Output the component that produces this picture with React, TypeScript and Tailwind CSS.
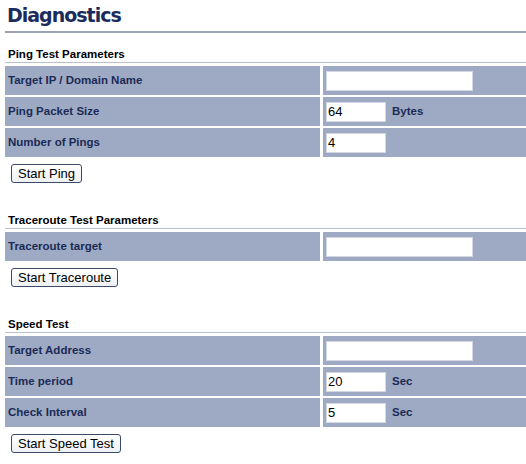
import React from "react";

const font = { fontFamily: '"Liberation Sans", Arial, sans-serif' };

function Row({ label, children }: { label: string; children?: React.ReactNode }) {
  return (
    <div className="grid grid-cols-[315px_1fr] gap-x-[3px] h-[29px]">
      <div className="bg-[#9eaac4] flex items-center pl-[3px] text-[11.5px] font-bold text-[#1b2a55]">{label}</div>
      <div className="bg-[#9eaac4] flex items-center pl-[3px] gap-[4px]">{children}</div>
    </div>
  );
}

function Input({ value = "", w }: { value?: string; w: string }) {
  return (
    <div className={`${w} h-[20px] bg-white border border-[#d4d8e2] flex items-center pl-[1px] text-[13px] text-black`}>
      {value}
    </div>
  );
}

function Unit({ t }: { t: string }) {
  return <span className="text-[11.5px] font-bold text-[#1b2a55] ml-[2px]">{t}</span>;
}

function Btn({ label }: { label: string }) {
  return (
    <div className="flex pl-[6px] mt-[7px]">
      <div className="flex items-center h-[19px] px-[6px] border border-[#3b4a66] rounded-[3px] bg-gradient-to-b from-white to-[#eef0f4] text-[13px] text-black">
        {label}
      </div>
    </div>
  );
}

function Header({ t, mt }: { t: string; mt: string }) {
  return (
    <div className={`${mt} h-[18px] border-b border-[#b9c1d2] flex items-end pl-[3px] pb-[1px] text-[11.5px] leading-[13px] font-bold text-black`}>
      {t}
    </div>
  );
}

export default function App() {
  return (
    <div className="w-[526px] h-[464px] bg-white pl-[5px] overflow-hidden" style={font}>
      <div className="h-[31px] flex items-start pt-[3px] pl-[2px]">
        <span className="text-[19px] font-bold text-[#1a2b5c] leading-[24px]" style={{ fontFamily: '"DejaVu Sans", Verdana, sans-serif', letterSpacing: "-1px" }}>
          Diagnostics
        </span>
      </div>
      <div className="h-[2px] bg-[#9aa1b2]" />

      <Header t="Ping Test Parameters" mt="mt-[12px]" />
      <div className="mt-[3px] flex flex-col gap-[2px]">
        <Row label="Target IP / Domain Name">
          <Input w="w-[147px]" />
        </Row>
        <Row label="Ping Packet Size">
          <Input w="w-[60px]" value="64" />
          <Unit t="Bytes" />
        </Row>
        <Row label="Number of Pings">
          <Input w="w-[60px]" value="4" />
        </Row>
      </div>
      <Btn label="Start Ping" />

      <Header t="Traceroute Test Parameters" mt="mt-[28px]" />
      <div className="mt-[3px] flex flex-col gap-[2px]">
        <Row label="Traceroute target">
          <Input w="w-[147px]" />
        </Row>
      </div>
      <Btn label="Start Traceroute" />

      <Header t="Speed Test" mt="mt-[28px]" />
      <div className="mt-[3px] flex flex-col gap-[2px]">
        <Row label="Target Address">
          <Input w="w-[147px]" />
        </Row>
        <Row label="Time period">
          <Input w="w-[60px]" value="20" />
          <Unit t="Sec" />
        </Row>
        <Row label="Check Interval">
          <Input w="w-[60px]" value="5" />
          <Unit t="Sec" />
        </Row>
      </div>
      <Btn label="Start Speed Test" />
    </div>
  );
}
